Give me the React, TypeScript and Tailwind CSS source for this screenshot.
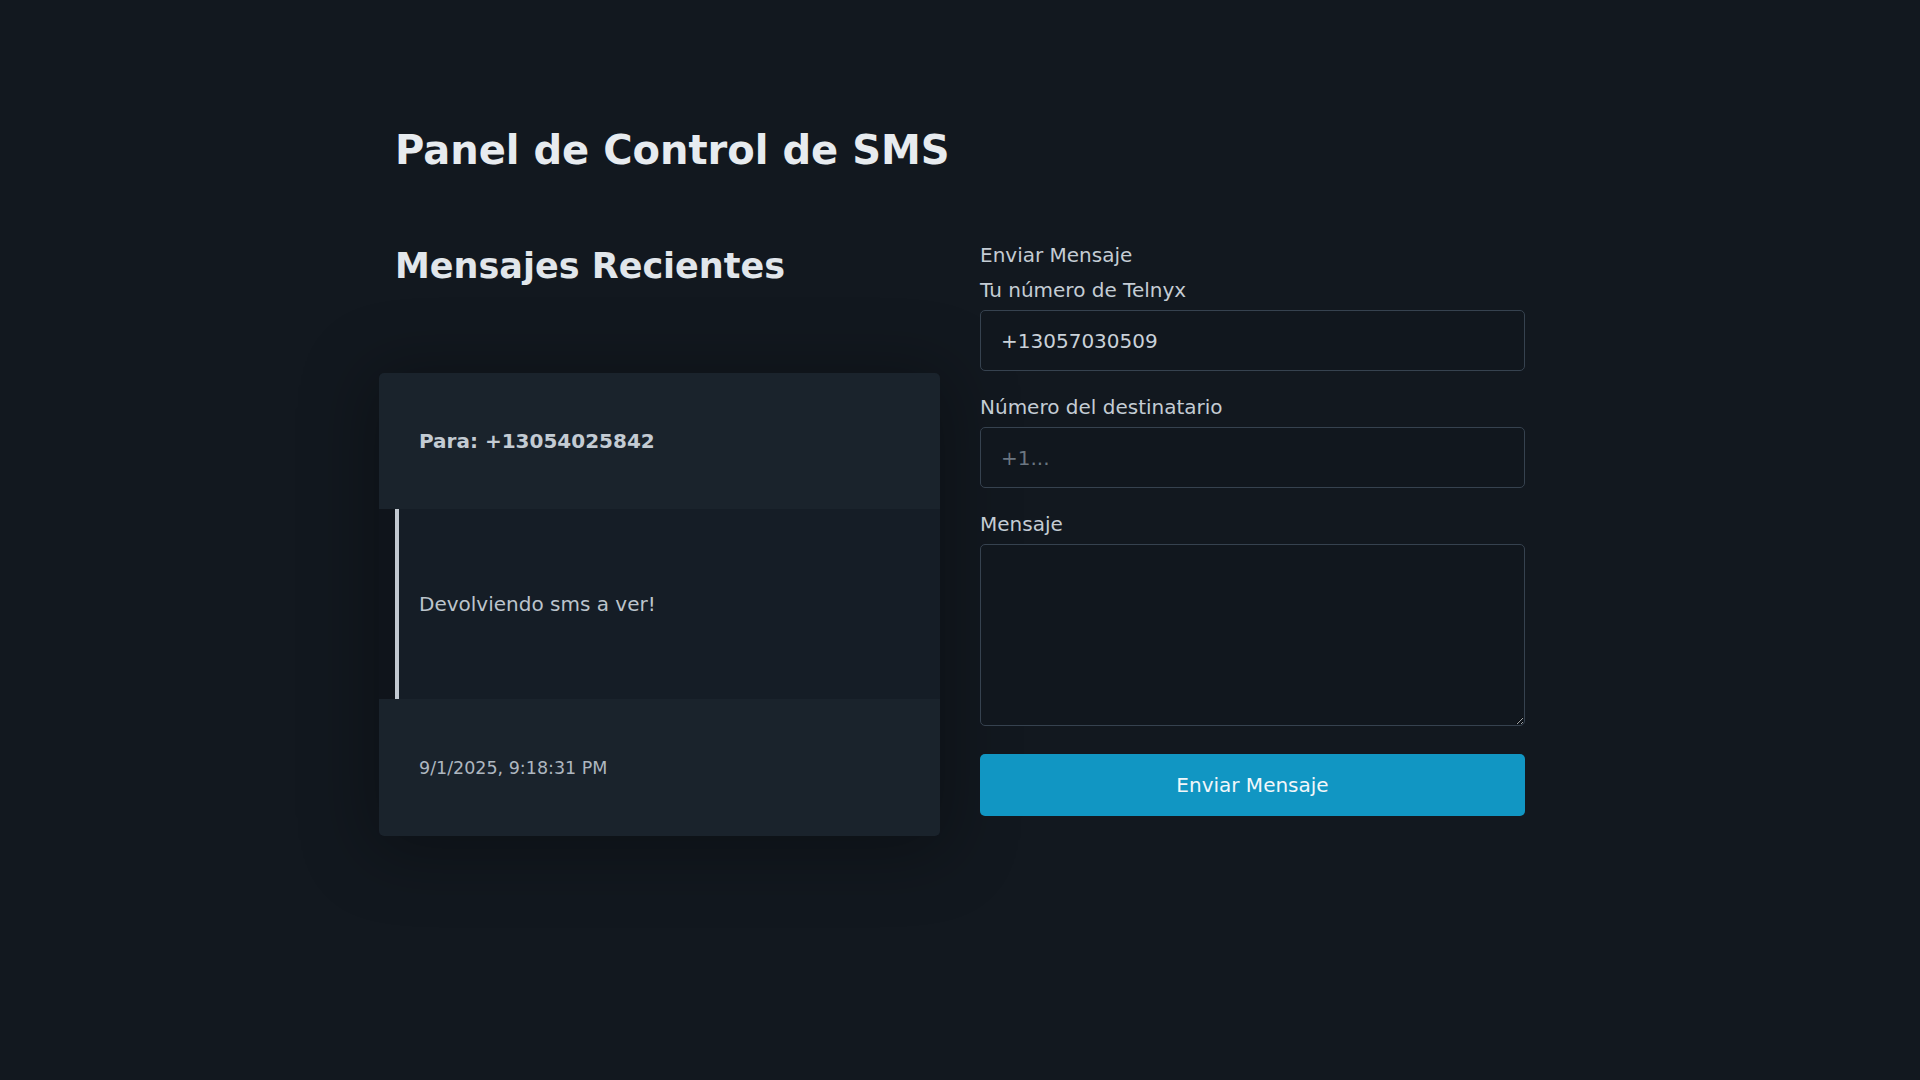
import React from "react";

export default function App() {
  return (
    <div
      className="min-h-screen w-full bg-[#12181f] text-[20px]"
      style={{ fontFamily: '"DejaVu Sans", "Liberation Sans", sans-serif' }}
    >
      <div className="mx-auto w-[1130px] pt-[126px]">
        <h1 className="text-[40px] leading-[48px] font-bold text-[#e7ebef]">
          Panel de Control de SMS
        </h1>
        <div className="mt-[66px] flex gap-[56px]">
          <section className="w-[529px] shrink-0">
            <h2 className="mt-[5px] text-[35px] leading-[42px] font-bold text-[#e1e6eb]">
              Mensajes Recientes
            </h2>
            <div className="-mx-4 mt-[86px] rounded-[5px] bg-[#0f141b] shadow-[0_8px_70px_10px_rgba(0,0,0,0.3)]">
              <div className="flex h-[136px] items-center rounded-t-[5px] bg-[#1a232c] pl-[40px]">
                <span className="font-bold leading-[30px] text-[#c3cbd3]">
                  Para: +13054025842
                </span>
              </div>
              <div className="ml-4 flex h-[190px] items-center border-l-4 border-[#c2c9d1] bg-[#151d26] pl-[20px]">
                <p className="leading-[30px] text-[#bcc4cc]">Devolviendo sms a ver!</p>
              </div>
              <div className="flex h-[137px] items-center rounded-b-[5px] bg-[#1a232c] pl-[40px]">
                <span className="text-[17.5px] leading-[26px] text-[#aeb7c0]">
                  9/1/2025, 9:18:31 PM
                </span>
              </div>
            </div>
          </section>
          <section className="flex-1">
            <form className="flex flex-col" onSubmit={(e) => e.preventDefault()}>
              <div className="mb-[5px] leading-[30px] text-[#c4ccd4]">Enviar Mensaje</div>
              <label className="mb-[5px] block leading-[30px] text-[#c4ccd4]">
                Tu número de Telnyx
              </label>
              <input
                type="text"
                defaultValue="+13057030509"
                className="mb-[21px] h-[61px] w-full rounded-[5px] border border-[#36424f] bg-[#11171e] px-[20px] text-[20px] text-[#c9d1d9] outline-none"
                style={{ fontFamily: '"DejaVu Sans", sans-serif' }}
              />
              <label className="mb-[5px] block leading-[30px] text-[#c4ccd4]">
                Número del destinatario
              </label>
              <input
                type="text"
                placeholder="+1..."
                className="mb-[21px] h-[61px] w-full rounded-[5px] border border-[#36424f] bg-[#11171e] px-[20px] text-[20px] text-[#c9d1d9] outline-none placeholder:text-[#6b7681]"
                style={{ fontFamily: '"DejaVu Sans", sans-serif' }}
              />
              <label className="mb-[5px] block leading-[30px] text-[#c4ccd4]">Mensaje</label>
              <textarea
                className="mb-[28px] block h-[182px] w-full rounded-[5px] border border-[#36424f] bg-[#11171e] px-[20px] py-[15px] text-[20px] text-[#c9d1d9] outline-none"
                style={{ fontFamily: '"DejaVu Sans", sans-serif' }}
              />
              <button
                type="submit"
                className="h-[62px] w-full rounded-[5px] bg-[#1196c3] text-[20px] text-[#f2f7fa]"
                style={{ fontFamily: '"DejaVu Sans", sans-serif' }}
              >
                Enviar Mensaje
              </button>
            </form>
          </section>
        </div>
      </div>
    </div>
  );
}
